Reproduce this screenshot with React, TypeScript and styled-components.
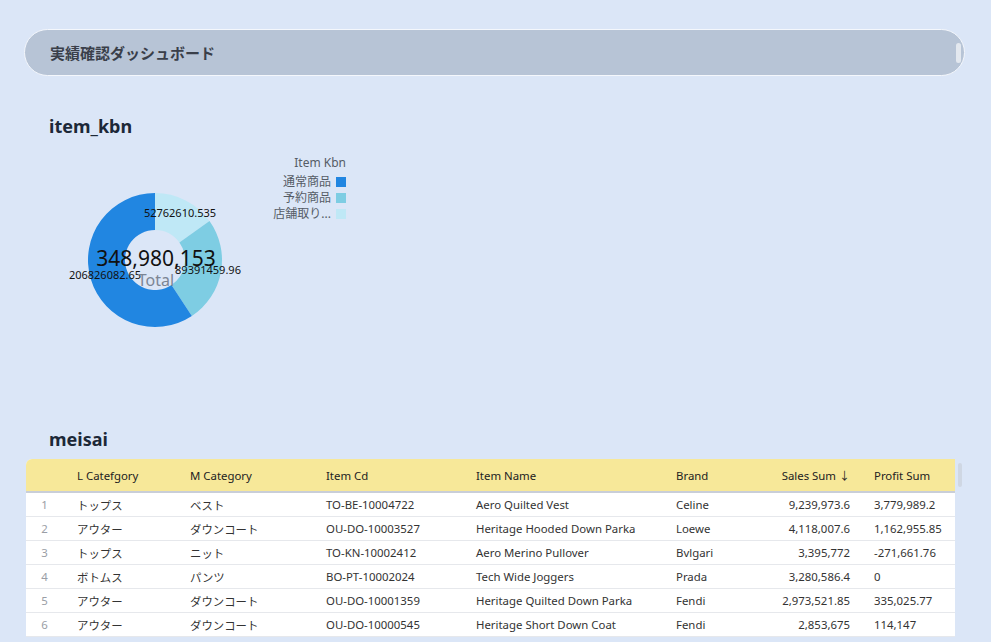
import styled, { createGlobalStyle } from "styled-components";

const GlobalStyle = createGlobalStyle`
  html, body {
    margin: 0;
    padding: 0;
    background: #dbe6f7;
    font-family: "Noto Sans", "Noto Sans CJK JP", sans-serif;
    overflow: hidden;
  }
`;

interface Row {
  lCat: string;
  mCat: string;
  cd: string;
  name: string;
  brand: string;
  sales: string;
  profit: string;
}

const rows: Row[] = [
  { lCat: "トップス", mCat: "ベスト", cd: "TO-BE-10004722", name: "Aero Quilted Vest", brand: "Celine", sales: "9,239,973.6", profit: "3,779,989.2" },
  { lCat: "アウター", mCat: "ダウンコート", cd: "OU-DO-10003527", name: "Heritage Hooded Down Parka", brand: "Loewe", sales: "4,118,007.6", profit: "1,162,955.85" },
  { lCat: "トップス", mCat: "ニット", cd: "TO-KN-10002412", name: "Aero Merino Pullover", brand: "Bvlgari", sales: "3,395,772", profit: "-271,661.76" },
  { lCat: "ボトムス", mCat: "パンツ", cd: "BO-PT-10002024", name: "Tech Wide Joggers", brand: "Prada", sales: "3,280,586.4", profit: "0" },
  { lCat: "アウター", mCat: "ダウンコート", cd: "OU-DO-10001359", name: "Heritage Quilted Down Parka", brand: "Fendi", sales: "2,973,521.85", profit: "335,025.77" },
  { lCat: "アウター", mCat: "ダウンコート", cd: "OU-DO-10000545", name: "Heritage Short Down Coat", brand: "Fendi", sales: "2,853,675", profit: "114,147" },
];

const slices = [
  { value: 52762610.535, color: "#bfe8f6" },
  { value: 89391459.96, color: "#7ecde3" },
  { value: 206826082.65, color: "#2186e1" },
];

const legend = [
  { label: "通常商品", color: "#2186e1" },
  { label: "予約商品", color: "#7ecde3" },
  { label: "店舗取り...", color: "#bfe8f6" },
];

const CX = 131;
const CY = 117;

// ドーナツの弧を作る
const arcPath = (cx: number, cy: number, r: number, ir: number, a0: number, a1: number) => {
  const p = (a: number, rad: number) => [cx + rad * Math.sin(a), cy - rad * Math.cos(a)];
  const [x0, y0] = p(a0, r);
  const [x1, y1] = p(a1, r);
  const [x2, y2] = p(a1, ir);
  const [x3, y3] = p(a0, ir);
  const large = a1 - a0 > Math.PI ? 1 : 0;
  return `M${x0} ${y0} A${r} ${r} 0 ${large} 1 ${x1} ${y1} L${x2} ${y2} A${ir} ${ir} 0 ${large} 0 ${x3} ${y3} Z`;
};

const Donut = () => {
  const total = slices.reduce((s, d) => s + d.value, 0);
  let acc = 0;
  return (
    <svg width="320" height="200" viewBox="0 0 320 200">
      {slices.map((s, i) => {
        const a0 = (acc / total) * Math.PI * 2;
        acc += s.value;
        const a1 = (acc / total) * Math.PI * 2;
        return <path key={i} d={arcPath(CX, CY, 67, 30, a0, a1)} fill={s.color} />;
      })}
      <g fontFamily="'Noto Sans', sans-serif" fontSize="11" fill="#111">
        <text x={CX + 25} y={CY - 43} textAnchor="middle">52762610.535</text>
        <text x={CX + 53} y={CY + 14} textAnchor="middle">89391459.96</text>
        <text x={CX - 50} y={CY + 19} textAnchor="middle">206826082.65</text>
      </g>
      <text x={CX + 1} y={CY + 6} textAnchor="middle" fontSize="21" fill="#111" fontFamily="'Noto Sans', sans-serif">348,980,153</text>
      <text x={CX + 1} y={CY + 26} textAnchor="middle" fontSize="16" fill="#7b8594" fontFamily="'Noto Sans', sans-serif">Total</text>
    </svg>
  );
};

export default function App() {
  return (
    <>
      <GlobalStyle />
      <Page>
        <Header>
          <HeaderTitle>実績確認ダッシュボード</HeaderTitle>
          <Thumb />
        </Header>

        <SectionTitle>item_kbn</SectionTitle>
        <ChartArea>
          <Donut />
          <Legend>
            <LegendTitle>Item Kbn</LegendTitle>
            {legend.map((l) => (
              <LegendItem key={l.label}>
                {l.label}
                <Swatch $color={l.color} />
              </LegendItem>
            ))}
          </Legend>
        </ChartArea>

        <SectionTitle $top={64}>meisai</SectionTitle>
        <TableWrap>
          <Table>
            <HeadRow>
              <Cell />
              <Cell>L Catefgory</Cell>
              <Cell>M Category</Cell>
              <Cell>Item Cd</Cell>
              <Cell>Item Name</Cell>
              <Cell>Brand</Cell>
              <Cell $right>Sales Sum <Arrow>↓</Arrow></Cell>
              <Cell>Profit Sum</Cell>
            </HeadRow>
            {rows.map((r, i) => (
              <BodyRow key={r.cd}>
                <NumCell>{i + 1}</NumCell>
                <Cell>{r.lCat}</Cell>
                <Cell>{r.mCat}</Cell>
                <Cell>{r.cd}</Cell>
                <Cell>{r.name}</Cell>
                <Cell>{r.brand}</Cell>
                <Cell $right>{r.sales}</Cell>
                <Cell>{r.profit}</Cell>
              </BodyRow>
            ))}
          </Table>
          <ScrollStub />
        </TableWrap>
      </Page>
    </>
  );
}

const Page = styled.div`
  padding: 29px 26px 0 24px;
  height: 642px;
  box-sizing: border-box;
`;

const Header = styled.div`
  display: flex;
  align-items: center;
  justify-content: space-between;
  height: 45px;
  background: #b7c4d6;
  border: 1px solid #f4f7fc;
  border-radius: 24px;
  padding: 0 3px 0 25px;
`;

const HeaderTitle = styled.div`
  font-size: 15px;
  font-weight: 700;
  color: #3a3f4a;
`;

const Thumb = styled.div`
  width: 5px;
  height: 20px;
  border-radius: 3px;
  background: #e3e8ef;
`;

const SectionTitle = styled.div<{ $top?: number }>`
  margin: ${(p) => p.$top ?? 38}px 0 0 25px;
  font-size: 18px;
  font-weight: 700;
  color: #1c2838;
  line-height: 24px;
`;

const ChartArea = styled.div`
  position: relative;
  height: 220px;
  margin-top: 5px;
`;

const Legend = styled.div`
  position: absolute;
  left: 200px;
  top: 12px;
  width: 122px;
  display: flex;
  flex-direction: column;
  align-items: flex-end;
  font-size: 12px;
  color: #555c66;
  line-height: 16px;
`;

const LegendTitle = styled.div`
  margin-bottom: 3px;
`;

const LegendItem = styled.div`
  display: flex;
  align-items: center;
  gap: 5px;
`;

const Swatch = styled.span<{ $color: string }>`
  width: 10px;
  height: 10px;
  background: ${(p) => p.$color};
`;

const TableWrap = styled.div`
  display: flex;
  margin: 8px 0 0 2px;
`;

const Table = styled.div`
  width: 929px;
  background: #fff;
  border-radius: 6px 0 0 0;
  overflow: hidden;
  font-size: 11.4px;
  color: #333;
`;

const grid = `
  display: grid;
  grid-template-columns: 43px 113px 136px 150px 200px 92px 106px 89px;
  align-items: center;
`;

const HeadRow = styled.div`
  ${grid}
  height: 32px;
  background: #f7e899;
  border-bottom: 2px solid #c9ced8;
  color: #222;
`;

const BodyRow = styled.div`
  ${grid}
  height: 23px;
  border-bottom: 1px solid #e6e8ec;
  &:first-of-type {
    height: 24px;
  }
`;

const Cell = styled.div<{ $right?: boolean }>`
  padding: ${(p) => (p.$right ? "0 16px 0 0" : "0 0 0 8px")};
  text-align: ${(p) => (p.$right ? "right" : "left")};
  white-space: nowrap;
  overflow: hidden;
`;

const NumCell = styled.div`
  text-align: center;
  padding-right: 6px;
  color: #9a9ea6;
`;

const Arrow = styled.span`
  font-size: 11px;
`;

const ScrollStub = styled.div`
  width: 4px;
  height: 24px;
  margin: 4px 0 0 3px;
  border-radius: 2px;
  background: #cfd7e3;
`;
